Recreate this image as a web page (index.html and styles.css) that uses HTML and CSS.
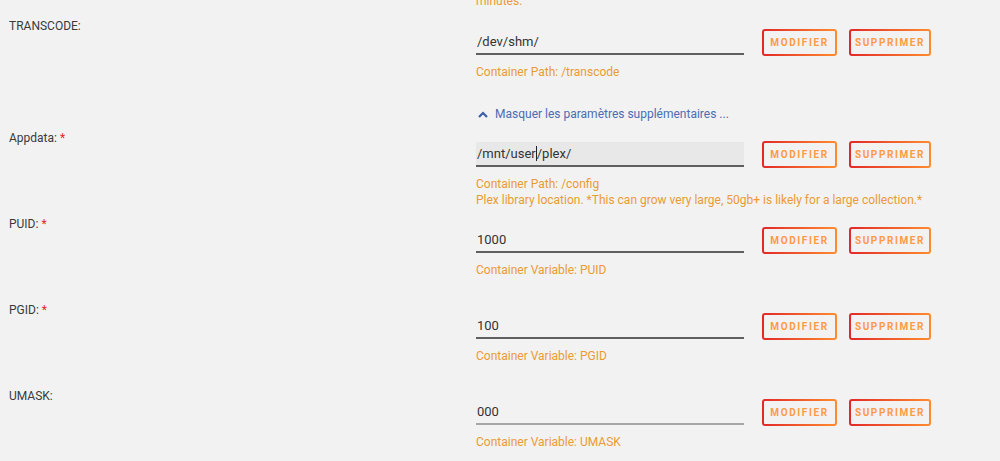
FILE: index.html
```html
<!DOCTYPE html>
<html lang="fr">
<head>
<meta charset="utf-8">
<title>Plex</title>
<link rel="stylesheet" href="styles.css">
</head>
<body>
<div class="form">
  <div class="row top-tail">
    <div class="label"></div>
    <div class="field">
      <div class="help">minutes.</div>
    </div>
  </div>

  <div class="row item first">
    <div class="label">TRANSCODE:</div>
    <div class="field">
      <div class="line">
        <div class="input">/dev/shm/</div>
        <button class="btn btn-mod">MODIFIER</button>
        <button class="btn btn-del">SUPPRIMER</button>
      </div>
      <div class="help">Container Path: /transcode</div>
    </div>
  </div>

  <div class="row linkrow">
    <div class="label"></div>
    <div class="field">
      <a class="toggle"><svg class="chev" viewBox="0 0 10 7" width="10" height="7"><path d="M1 6 L5 2 L9 6" fill="none" stroke="#3d5ea6" stroke-width="2.2"/></svg>Masquer les paramètres supplémentaires ...</a>
    </div>
  </div>

  <div class="row item">
    <div class="label">Appdata: <span class="req">*</span></div>
    <div class="field">
      <div class="line">
        <div class="input focused">/mnt/user<span class="caret"></span>/plex/</div>
        <button class="btn btn-mod">MODIFIER</button>
        <button class="btn btn-del">SUPPRIMER</button>
      </div>
      <div class="help">Container Path: /config<br>Plex library location. *This can grow very large, 50gb+ is likely for a large collection.*</div>
    </div>
  </div>

  <div class="row item">
    <div class="label">PUID: <span class="req">*</span></div>
    <div class="field">
      <div class="line">
        <div class="input">1000</div>
        <button class="btn btn-mod">MODIFIER</button>
        <button class="btn btn-del">SUPPRIMER</button>
      </div>
      <div class="help">Container Variable: PUID</div>
    </div>
  </div>

  <div class="row item">
    <div class="label">PGID: <span class="req">*</span></div>
    <div class="field">
      <div class="line">
        <div class="input">100</div>
        <button class="btn btn-mod">MODIFIER</button>
        <button class="btn btn-del">SUPPRIMER</button>
      </div>
      <div class="help">Container Variable: PGID</div>
    </div>
  </div>

  <div class="row item">
    <div class="label">UMASK:</div>
    <div class="field">
      <div class="line">
        <div class="input light">000</div>
        <button class="btn btn-mod">MODIFIER</button>
        <button class="btn btn-del">SUPPRIMER</button>
      </div>
      <div class="help">Container Variable: UMASK</div>
    </div>
  </div>
</div>
</body>
</html>
```

FILE: styles.css
```css
html, body {
  margin: 0;
  padding: 0;
  background: #f2f2f2;
  overflow: hidden;
}
body {
  font-family: Roboto, "Liberation Sans", sans-serif;
  color: #3c3c3c;
  height: 461px;
}
.form {
  padding-left: 9px;
}
.row {
  display: grid;
  grid-template-columns: 467px 1fr;
}
.top-tail {
  margin-top: -7px;
  height: 25px;
}
.item {
  height: 86px;
}
.linkrow {
  height: 26px;
}
.label {
  font-size: 12px;
  line-height: 16px;
  color: #3a3a3a;
}
.req {
  color: #e22828;
}
.field {
  display: flex;
  flex-direction: column;
}
.line {
  display: flex;
  align-items: center;
  height: 27px;
  margin-top: 11px;
}
.input {
  box-sizing: border-box;
  width: 268px;
  height: 25px;
  padding: 0 1px;
  font-size: 13px;
  line-height: 23px;
  color: #333;
  border-bottom: 2px solid #5f5f5f;
  margin-right: 18px;
  white-space: nowrap;
}
.input.focused {
  background: #e8e8e8;
}
.input.light {
  border-bottom-color: #a6a6a6;
}
.caret {
  display: inline-block;
  width: 1px;
  height: 15px;
  background: #222;
  vertical-align: -3px;
}
.btn {
  box-sizing: border-box;
  height: 27px;
  padding: 0;
  font-family: Roboto, "Liberation Sans", sans-serif;
  font-size: 10px;
  font-weight: bold;
  letter-spacing: 1.6px;
  color: #ff9a45;
  border: 2px solid transparent;
  border-radius: 3px;
  background:
    linear-gradient(#f2f2f2, #f2f2f2) padding-box,
    linear-gradient(90deg, #e22828, #ff8c2f) border-box;
  cursor: pointer;
}
.btn-mod {
  width: 75px;
  margin-right: 12px;
}
.btn-del {
  width: 82px;
}
.help {
  margin-top: 8px;
  font-size: 12px;
  line-height: 16px;
  color: #eb9b33;
}
.top-tail .help {
  margin-top: 0;
}
.toggle {
  display: flex;
  align-items: center;
  margin-top: 1px;
  font-size: 12px;
  line-height: 18px;
  color: #4a6db5;
}
.chev {
  margin: 0 7px 0 2px;
}
```
